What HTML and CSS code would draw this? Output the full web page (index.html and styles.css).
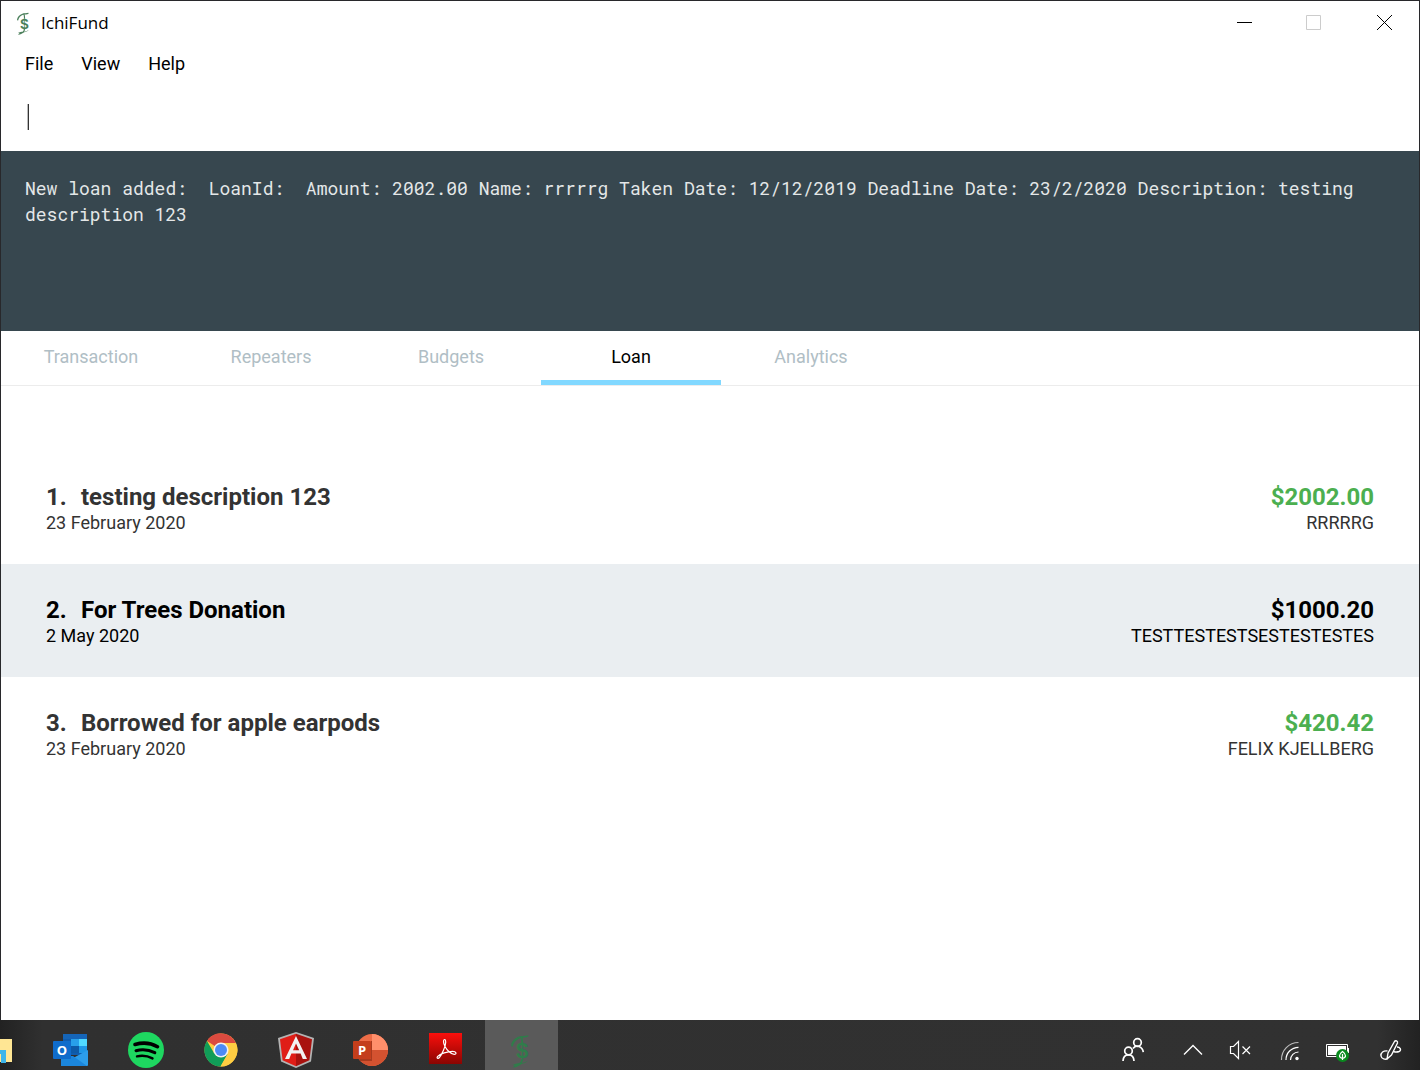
FILE: index.html
```html
<!DOCTYPE html>
<html lang="en">
<head>
<meta charset="utf-8">
<meta name="viewport" content="width=device-width, initial-scale=1">
<title>IchiFund</title>
<link rel="stylesheet" href="styles.css">
</head>
<body>
<div class="window">
  <header class="titlebar">
    <svg class="app-icon" viewBox="0 0 20 34" aria-hidden="true">
      <path d="M18 1.200C15 2.200 12 1.600 9 2.600C5 4 1.500 7.500 1.200 11c0 1 .6 1.700 1.600 1.600C3.500 9 6 5.600 10 4.200c3-1 6-.2 8.500-2z" fill="currentColor"/>
      <path d="M11 2.500c1.500 2.500 1.200 4 1.200 7M12 25c.3 2-.5 3.500-2 4.500" fill="none" stroke="currentColor" stroke-width="1.700"/>
      <path d="M18.500 26.500c-4 2.500-7 2.300-10.500 2.800-2 .3-4 1-5.500 1.600l2.500.6-2.500 2C7 33.500 9.500 31.500 11.500 30c2.500-.8 5-1.300 7-3.500z" fill="currentColor"/>
      <text x="12" y="25" text-anchor="middle" class="logo-text">$</text>
    </svg>
    <h1 class="app-name">IchiFund</h1>
    <div class="window-controls">
      <button type="button" aria-label="Minimize"><svg width="16" height="16"><path d="M1 7.500h15" stroke="#000"/></svg></button>
      <button type="button" aria-label="Maximize" disabled><svg width="16" height="16"><path d="M.5.5h14v14H.5z" fill="none" stroke="#ccc"/></svg></button>
      <button type="button" aria-label="Close"><svg width="16" height="16"><path d="M1 0l15 15M16 0L1 15" stroke="#000"/></svg></button>
    </div>
  </header>

  <nav class="menubar" aria-label="Menu">
    <button type="button">File</button>
    <button type="button">View</button>
    <button type="button">Help</button>
  </nav>

  <main class="content">
    <div class="command">
      <span class="caret"></span>
      <input class="command-input" type="text" aria-label="Command">
    </div>

    <output class="result">New loan added:  LoanId:  Amount: 2002.00 Name: rrrrrg Taken Date: 12/12/2019 Deadline Date: 23/2/2020 Description: testing description 123</output>

    <div class="tabs" role="tablist">
      <button type="button" role="tab" class="tab">Transaction</button>
      <button type="button" role="tab" class="tab">Repeaters</button>
      <button type="button" role="tab" class="tab">Budgets</button>
      <button type="button" role="tab" class="tab tab-active" aria-selected="true">Loan</button>
      <button type="button" role="tab" class="tab">Analytics</button>
    </div>

    <ul class="loans">
      <li class="loan">
        <div>
          <h2 class="loan-title"><span class="loan-index">1.</span>testing description 123</h2>
          <p class="loan-meta">23 February 2020</p>
        </div>
        <div class="loan-right">
          <p class="loan-amount">$2002.00</p>
          <p class="loan-meta">RRRRRG</p>
        </div>
      </li>
      <li class="loan loan-selected">
        <div>
          <h2 class="loan-title"><span class="loan-index">2.</span>For Trees Donation</h2>
          <p class="loan-meta">2 May 2020</p>
        </div>
        <div class="loan-right">
          <p class="loan-amount">$1000.20</p>
          <p class="loan-meta">TESTTESTESTSESTESTESTES</p>
        </div>
      </li>
      <li class="loan">
        <div>
          <h2 class="loan-title"><span class="loan-index">3.</span>Borrowed for apple earpods</h2>
          <p class="loan-meta">23 February 2020</p>
        </div>
        <div class="loan-right">
          <p class="loan-amount">$420.42</p>
          <p class="loan-meta">FELIX KJELLBERG</p>
        </div>
      </li>
    </ul>
  </main>
</div>

<footer class="taskbar">
  <div class="apps">
    <button type="button" class="app app-cut" aria-label="File Explorer">
      <svg viewBox="0 0 33 40" class="explorer-icon"><path d="M0 9h12v23H0z" fill="#ffe694"/><path d="M0 20h6v13H1v-9H0z" fill="#3db5ea"/></svg>
    </button>
    <button type="button" class="app" aria-label="Outlook">
      <svg viewBox="0 0 40 40">
        <path d="M12 5a1 1 0 0 1 1-1h22a1 1 0 0 1 1 1v20H12z" fill="#0f5db0"/>
        <path d="M12 4h24v5H12z" fill="#1565b8"/>
        <path d="M20 9h8v7h-8z" fill="#28a0ea"/><path d="M28 9h8v7h-8z" fill="#50d9ff"/>
        <path d="M20 16h8v7h-8z" fill="#0d5aa8"/><path d="M28 16h8v7h-8z" fill="#1f97e6"/>
        <path d="M37 20v15a1 1 0 0 1-1 1H11a1 1 0 0 1-1-1v-8h14z" fill="#2c9dea"/>
        <path d="M10 26h12l14 10H11a1 1 0 0 1-1-1z" fill="#1b86dc"/>
        <rect x="2" y="11" width="18" height="18" rx="1" fill="#0f6ccb"/>
        <text x="11" y="25" text-anchor="middle" class="tile-letter">O</text>
      </svg>
    </button>
    <button type="button" class="app" aria-label="Spotify">
      <svg viewBox="0 0 40 40"><circle cx="20" cy="20" r="18" fill="#1ed760"/><g fill="none" stroke="#000" stroke-linecap="round"><path d="M9 14.500c7-2 16-1.500 22.500 2.200" stroke-width="3.600"/><path d="M10 20.700c6-1.700 13-1 18.800 2" stroke-width="3"/><path d="M11 26.400c5-1.200 10.500-.6 15.500 2" stroke-width="2.400"/></g></svg>
    </button>
    <button type="button" class="app" aria-label="Chrome">
      <svg viewBox="0 0 40 40">
        <circle cx="20" cy="20" r="16.500" fill="#ffcd42"/>
        <path d="M20 20L34.900 13A16.500 16.500 0 0 0 6 11z" fill="#db4a3f"/>
        <path d="M6 11a16.500 16.500 0 0 0 13.500 25.500L27 24l-7-4-7 3z" fill="#109d58"/>
        <path d="M20 13h14.900A16.500 16.500 0 0 1 19.500 36.500L26.500 24z" fill="#ffcd42"/>
        <circle cx="20" cy="20" r="7.600" fill="#f1f1f1"/><circle cx="20" cy="20" r="6" fill="#4c8bf5"/>
      </svg>
    </button>
    <button type="button" class="app" aria-label="Angular">
      <svg viewBox="0 0 40 40"><path d="M20 2l18 6-3 23.500L20 38 5 31.500 2 8z" fill="#b3b3b3"/><path d="M20 3.800L4 9.200l2.600 21L20 36.200z" fill="#df1d17"/><path d="M20 3.800l16 5.400-2.600 21L20 36.200z" fill="#a9120f"/><path d="M20 6L9 29h4.200l2.200-5.400h9.200l2.200 5.400H31zm0 7.500l3.200 6.800h-6.200z" fill="#f2f2f2"/></svg>
    </button>
    <button type="button" class="app" aria-label="PowerPoint">
      <svg viewBox="0 0 40 40"><circle cx="21" cy="20" r="16" fill="#ed6c47"/><path d="M21 4a16 16 0 0 1 16 16H21z" fill="#ff8f6b"/><path d="M5 20h32a16 16 0 0 1-32 0z" fill="#d35230"/><path d="M20 11h1v20H9l-1-2h12z" fill="#a83a1e"/><rect x="2" y="11" width="18" height="18" rx="1" fill="#c43e1c"/><text x="11" y="25" text-anchor="middle" class="tile-letter">P</text></svg>
    </button>
    <button type="button" class="app" aria-label="Adobe Acrobat">
      <svg viewBox="0 0 40 40"><defs><linearGradient id="pdf" x2="0" y2="1"><stop stop-color="#fa0f0c"/><stop offset="1" stop-color="#8a0502"/></linearGradient></defs><path d="M3 3h33v31H3z" fill="url(#pdf)"/><path d="M18.800 9.500c-2 0-1.400 4 .2 7 1.800 3.500 6 7.800 9.200 7.800 3 0 2-3-1.500-3-5 0-12.700 2.500-15 5-1.600 2 .3 3 2 .8 2.300-3 5.800-10.500 6-14.600 0-1.800-.2-3-.9-3z" fill="none" stroke="#fff" stroke-width="1.200"/></svg>
    </button>
    <button type="button" class="app app-active" aria-label="IchiFund">
      <svg viewBox="-9 -4 40 40">
        <path d="M18 1.200C15 2.200 12 1.600 9 2.600C5 4 1.500 7.500 1.200 11c0 1 .6 1.700 1.600 1.600C3.500 9 6 5.600 10 4.200c3-1 6-.2 8.500-2z" fill="currentColor"/>
        <path d="M11 2.500c1.500 2.500 1.200 4 1.200 7M12 25c.3 2-.5 3.500-2 4.500" fill="none" stroke="currentColor" stroke-width="1.700"/>
        <path d="M18.500 26.500c-4 2.500-7 2.300-10.500 2.800-2 .3-4 1-5.500 1.600l2.500.6-2.500 2C7 33.500 9.500 31.500 11.500 30c2.500-.8 5-1.300 7-3.500z" fill="currentColor"/>
        <text x="12" y="24" text-anchor="middle" class="logo-text">$</text>
      </svg>
    </button>
  </div>

  <div class="tray">
    <button type="button" class="tray-wide" aria-label="People">
      <svg viewBox="0 0 24 40" class="tray-icon"><g fill="none" stroke="#fff" stroke-width="1.700"><circle cx="16.500" cy="12.500" r="3.800"/><path d="M12 18.500c1.500-2.200 4-2.700 6-2 2.600 1 4 3 4.300 5.700"/><circle cx="7.500" cy="21" r="3.800"/><path d="M2 31c.2-4 2.500-6.200 5.500-6.200s5.300 2.200 5.500 6.200"/></g></svg>
    </button>
    <button type="button" aria-label="Show hidden icons">
      <svg viewBox="0 0 24 40" class="tray-icon"><path d="M3 24.500l9-9 9 9" fill="none" stroke="#fff" stroke-width="1.400"/></svg>
    </button>
    <button type="button" aria-label="Muted">
      <svg viewBox="0 0 24 40" class="tray-icon"><path d="M1.500 16.500h3l5-5v17l-5-5h-3zM13.500 16.500l7.500 7.500m0-7.500L13.500 24" fill="none" stroke="#fff" stroke-width="1.200"/></svg>
    </button>
    <button type="button" aria-label="Wi-Fi">
      <svg viewBox="0 0 24 40" class="tray-icon"><g fill="none" stroke="#fff" stroke-width="1.200"><path d="M4.500 30A17 17 0 0 1 21.500 12.500" stroke="#bbb"/><path d="M9 30a12.500 12.500 0 0 1 12.500-12.700"/><path d="M13.500 30a8 8 0 0 1 8-8"/></g><circle cx="20" cy="28.500" r="1.700" fill="#fff"/></svg>
    </button>
    <button type="button" aria-label="Battery">
      <svg viewBox="0 0 24 40" class="tray-icon"><path d="M1.500 14.500h21v12h-21z" fill="none" stroke="#fff"/><path d="M3 16h18v9H3zM23 18h1v5h-1z" fill="#fff"/><circle cx="17.500" cy="25.500" r="6.500" fill="#0a8a1f"/><path d="M17.500 21.500c-4 3-4 6 0 7 4-1 4-4 0-7zM17.500 24v6" fill="none" stroke="#fff" stroke-width="1.200"/></svg>
    </button>
    <button type="button" class="tray-pen" aria-label="Pen workspace">
      <svg viewBox="0 0 24 40" class="tray-icon"><g fill="none" stroke="#fff" stroke-width="1.400" stroke-linejoin="round"><path d="M8 29l1-6L15.500 11.500c1-1.500 3.500-.5 3 1.500L12.500 25z"/><path d="M8.500 21c-4-.5-7 1.500-6.500 5 .5 3 4.500 4 6.500 2.500M18 17c3 0 5 3 2 4.500-1.500.7-4 .5-5.500 0"/></g></svg>
    </button>
  </div>
</footer>
</body>
</html>
```
FILE: styles.css
```css
* {
  box-sizing: border-box;
}

body {
  margin: 0;
  min-height: 100vh;
  display: flex;
  flex-direction: column;
  background: #fff;
  color: #000;
  font: 18px/24px Roboto, sans-serif;
}

h1, h2, p, ul {
  margin: 0;
  padding: 0;
}

button {
  border: 0;
  padding: 0;
  background: none;
  color: inherit;
  font: inherit;
}

svg {
  display: block;
}

.window {
  flex: 1;
  display: flex;
  flex-direction: column;
  border: 1px solid #28282b;
  border-bottom: 0;
}

/* Title bar */
.titlebar {
  display: flex;
  align-items: center;
  height: 44px;
  padding-left: 15px;
}

.app-icon {
  width: 14px;
  height: 23px;
  color: #4a7f5a;
}

.logo-text {
  font: bold 22px "Liberation Sans", sans-serif;
  fill: currentColor;
}

.app-name {
  margin-left: 11px;
  font: 17px/24px "Open Sans", "Noto Sans", sans-serif;
}

.window-controls {
  display: flex;
  align-self: stretch;
  margin-left: auto;
}

.window-controls button {
  display: flex;
  align-items: center;
  justify-content: center;
  width: 70px;
}

/* Menu and command line */
.menubar {
  display: flex;
  gap: 28px;
  height: 38px;
  padding: 7px 24px;
}

.command {
  display: flex;
  align-items: center;
  height: 68px;
  padding: 0 24px 0 26px;
}

.caret {
  width: 2px;
  height: 26px;
  border-left: 1px solid #bbb;
  background: #333;
}

.command-input {
  flex: 1;
  min-width: 0;
  height: 40px;
  border: 0;
  outline: 0;
  padding: 0;
  background: none;
  font: inherit;
}

.content {
  flex: 1;
  display: flex;
  flex-direction: column;
}

.result {
  min-height: 180px;
  padding: 24px;
  background: #37474f;
  color: #e4e7e8;
  font: 18px/26px "Roboto Mono", "Liberation Mono", monospace;
  white-space: pre-wrap;
}

/* Tabs */
.tabs {
  display: flex;
  border-bottom: 1px solid #ececec;
}

.tab {
  width: 180px;
  height: 54px;
  padding-top: 3px;
  border-bottom: 5px solid transparent;
  color: #b0bec5;
}

.tab-active {
  border-bottom-color: #81d8ff;
  color: #000;
}

/* Loans */
.loans {
  padding-top: 65px;
  list-style: none;
}

.loan {
  display: flex;
  justify-content: space-between;
  padding: 32px 45px 29px;
  color: #333;
}

.loan-selected {
  background: #eaeef1;
  color: #000;
}

.loan-title,
.loan-amount {
  font-size: 24px;
  line-height: 28px;
  font-weight: 700;
}

.loan-title {
  display: flex;
}

.loan-index {
  min-width: 35px;
}

.loan-right {
  text-align: right;
}

.loan-amount {
  color: #4caf50;
}

.loan-selected .loan-amount {
  color: #000;
}

/* Taskbar */
.taskbar {
  display: flex;
  justify-content: space-between;
  height: 50px;
  background: linear-gradient(90deg, #222, #303030 3%, #313131 97%, #222);
  overflow: hidden;
}

.apps {
  display: flex;
  gap: 2px;
}

.app {
  display: flex;
  align-items: flex-end;
  width: 73px;
  padding-left: 16px;
}

.app svg {
  width: 40px;
  height: 40px;
}

.app-cut {
  width: 33px;
  padding-left: 0;
}

.app .explorer-icon {
  width: 33px;
}

.app-active {
  background: #5a5a5a;
  color: #2f7d4a;
}

.tile-letter {
  font: bold 13px "Open Sans", sans-serif;
  fill: #fff;
}

.tray {
  display: flex;
}

.tray button {
  display: flex;
  align-items: flex-end;
  justify-content: center;
  width: 48px;
}

.tray .tray-wide {
  width: 72px;
}

.tray .tray-pen {
  width: 59px;
}

.tray-icon {
  width: 24px;
  height: 40px;
}
```
